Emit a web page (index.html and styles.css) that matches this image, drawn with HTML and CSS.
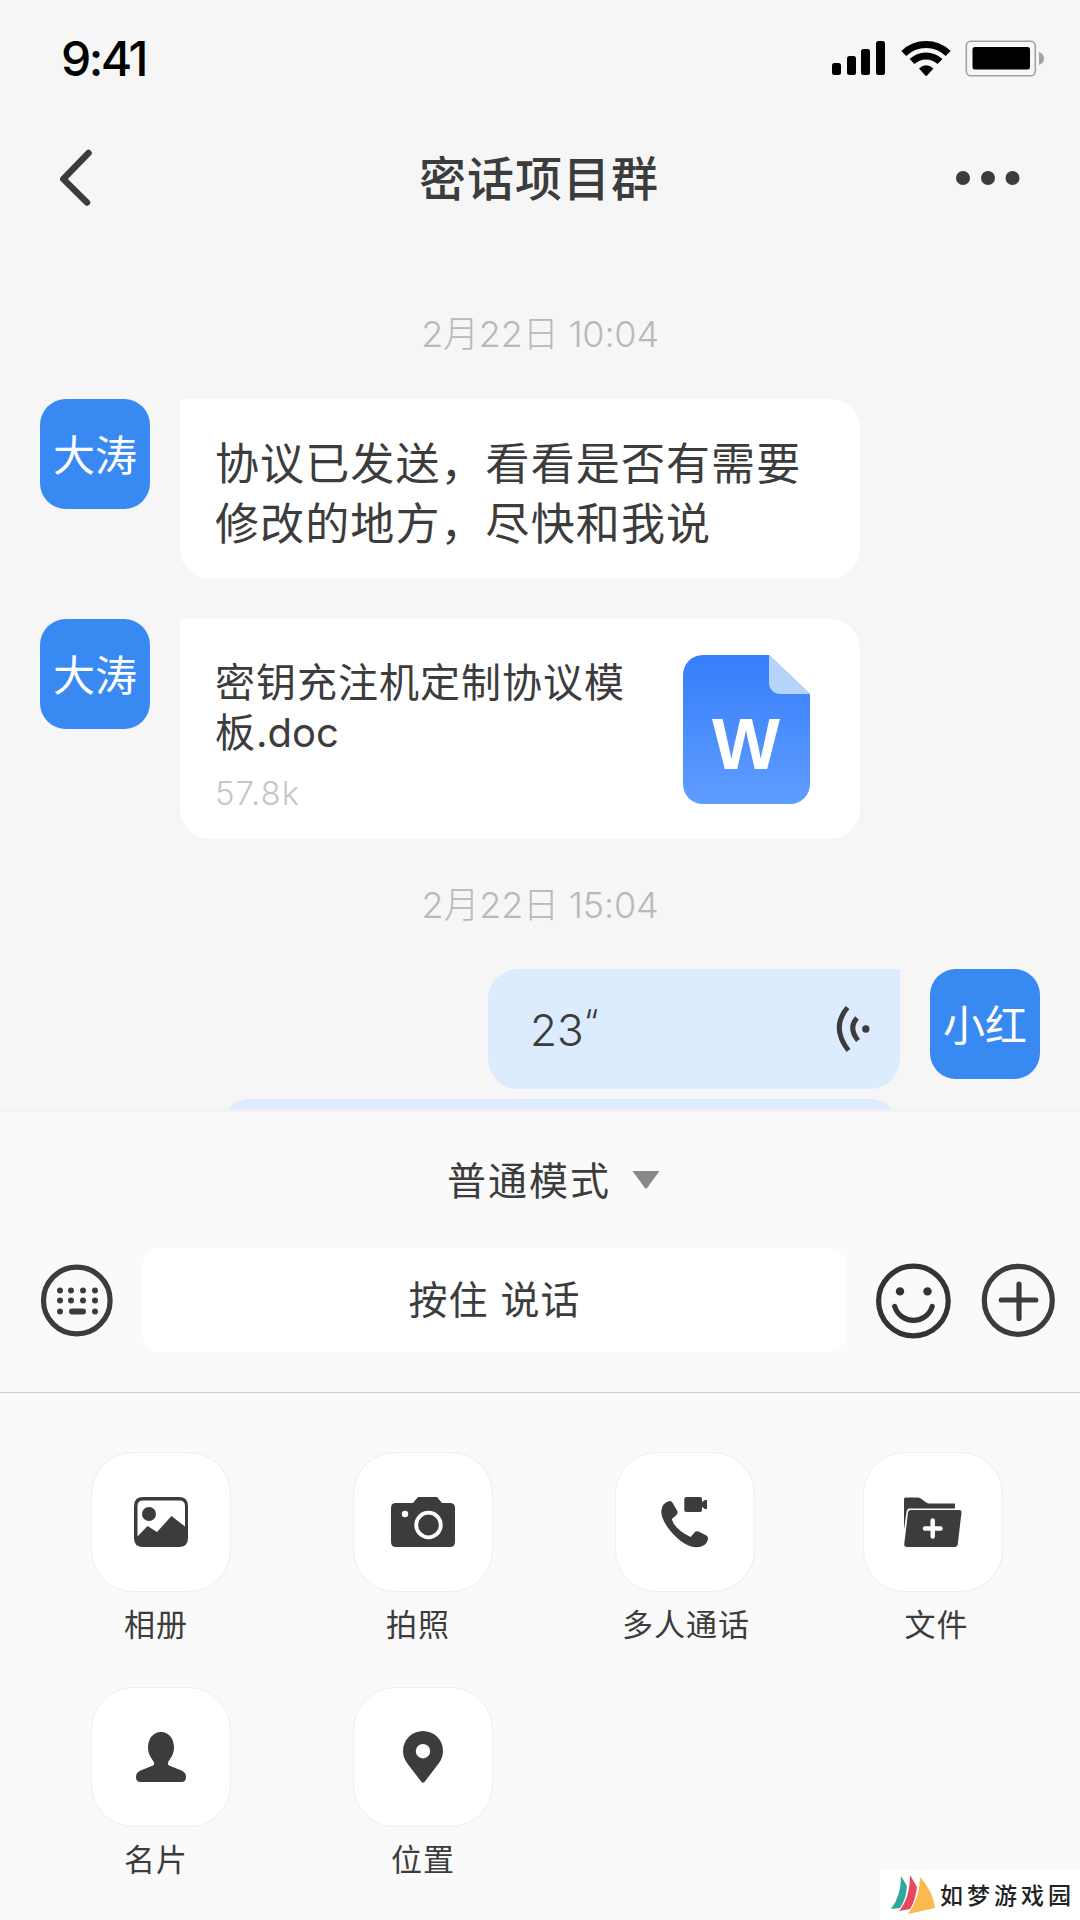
FILE: index.html
```html
<!DOCTYPE html>
<html lang="zh-CN">
<head>
    <meta charset="UTF-8">
    <meta name="viewport" content="width=device-width, initial-scale=1.0">
    <title>密话项目群</title>
    <link rel="stylesheet" href="styles.css">
</head>
<body>
    <div class="phone">
        <div class="status-bar">
            <span class="clock">9:41</span>
            <svg class="status-icons" width="214" height="40" viewBox="0 0 214 40">
                <rect x="2" y="24" width="9" height="12" rx="2.5"/>
                <rect x="17" y="17" width="9" height="19" rx="2.5"/>
                <rect x="31" y="10" width="9" height="26" rx="2.5"/>
                <rect x="46" y="2" width="9" height="34" rx="2.5"/>
                <g fill="none" stroke="#000" stroke-width="7">
                    <path d="M73.8 14.400a32 32 0 0 1 44.4 0"/>
                    <path d="M82 22.600a20 20 0 0 1 28 0"/>
                </g>
                <path d="M89 29.500q7-6.500 14.400 0l-6.300 7q-.9.900-1.800 0z"/>
                <rect x="136.300" y="2.300" width="69" height="34.500" rx="4.500" fill="none" stroke="#a2a2a2" stroke-width="1.600"/>
                <rect x="142.500" y="8" width="57.500" height="22.500" rx="2.500"/>
                <path d="M209 13q5 2 5 6.500t-5 6.500z" fill="#a2a2a2"/>
            </svg>
        </div>

        <div class="header">
            <svg class="back" width="36" height="60" viewBox="0 0 36 60">
                <path d="M32.500 5 7.300 31 31 54.500"/>
            </svg>
            <h1>密话项目群</h1>
            <svg class="more" width="64" height="16" viewBox="0 0 64 16">
                <circle cx="7" cy="8" r="7"/>
                <circle cx="32" cy="8" r="7"/>
                <circle cx="56.500" cy="8" r="7"/>
            </svg>
        </div>

        <div class="chat">
            <div class="date">2月22日 10:04</div>
            <div class="row">
                <div class="avatar">大涛</div>
                <div class="bubble text">协议已发送，看看是否有需要<br>修改的地方，尽快和我说</div>
            </div>
            <div class="row">
                <div class="avatar">大涛</div>
                <div class="bubble file">
                    <div class="file-info">
                        <div class="file-name">密钥充注机定制协议模<br>板<span class="ext">.doc</span></div>
                        <div class="file-size">57.8k</div>
                    </div>
                    <svg class="file-icon" width="127" height="149" viewBox="0 0 127 149">
                        <defs>
                            <linearGradient id="doc" x1="0" y1="0" x2="0" y2="1">
                                <stop offset="0" stop-color="#367dfb"/>
                                <stop offset="1" stop-color="#5f9dff"/>
                            </linearGradient>
                        </defs>
                        <path d="M20 0h66l41 39v90a20 20 0 0 1-20 20H20a20 20 0 0 1-20-20V20A20 20 0 0 1 20 0z" fill="url(#doc)"/>
                        <path d="M86 0l41 39H97a11 11 0 0 1-11-11z" fill="#b6d4f9"/>
                        <text x="63" y="114" text-anchor="middle">W</text>
                    </svg>
                </div>
            </div>
            <div class="date second">2月22日 15:04</div>
            <div class="row mine">
                <div class="bubble voice">
                    <span>23<span class="quote">“</span></span>
                    <svg width="34" height="48" viewBox="0 0 34 48">
                        <path d="M11.500 2.500Q-5.500 22.500 12.500 45.500M21 13Q12 23 22 35.500"/>
                        <circle cx="29.800" cy="24" r="3.700"/>
                    </svg>
                </div>
                <div class="avatar">小红</div>
            </div>
            <div class="bubble next"></div>
        </div>

        <div class="composer">
            <div class="mode">
                <span>普通模式</span>
                <svg width="28" height="18" viewBox="0 0 28 18"><path d="M.5 0h27L15 17q-1 1-2 0z"/></svg>
            </div>
            <div class="input-row">
                <svg class="icon" width="74" height="76" viewBox="0 0 74 76">
                    <circle class="line" cx="36.800" cy="38.500" r="33.300"/>
                    <circle cx="20" cy="28.500" r="3"/>
                    <circle cx="31" cy="28.500" r="3"/>
                    <circle cx="43" cy="28.500" r="3"/>
                    <circle cx="55" cy="28.500" r="3"/>
                    <circle cx="20" cy="38.500" r="3"/>
                    <circle cx="31" cy="38.500" r="3"/>
                    <circle cx="43" cy="38.500" r="3"/>
                    <circle cx="55" cy="38.500" r="3"/>
                    <circle cx="20" cy="49.500" r="3"/>
                    <rect x="29" y="46.500" width="17" height="6" rx="3"/>
                    <circle cx="55" cy="49.500" r="3"/>
                </svg>
                <div class="talk">按住 说话</div>
                <svg class="icon smile" width="76" height="78" viewBox="0 0 76 78">
                    <circle class="line" cx="38.400" cy="40" r="34.800"/>
                    <circle cx="25" cy="30.400" r="4.200"/>
                    <circle cx="52.500" cy="30.400" r="4.200"/>
                    <path class="line" d="M19.700 45.500c6 18.500 31.500 18.500 37.500 0"/>
                </svg>
                <svg class="icon" width="76" height="76" viewBox="0 0 76 76">
                    <circle class="line" cx="38.300" cy="38.300" r="34"/>
                    <path class="line" d="M21.300 38h34.500M39 22v34.500"/>
                </svg>
            </div>
        </div>

        <div class="tools">
            <div class="tool">
                <div class="tile">
                    <svg width="64" height="52" viewBox="0 0 64 52">
                        <path fill-rule="evenodd" d="M14 1h36q9 0 9 9v32q0 9-9 9H14q-9 0-9-9V10q0-9 9-9zM14 4.500Q8.500 4.500 8.500 10v30.500L18.500 30l9.500 6L42.500 20 56 30.500V10q0-5.500-5.500-5.500z"/>
                        <circle cx="20" cy="18" r="7"/>
                    </svg>
                </div>
                <span class="shift-left">相册</span>
            </div>
            <div class="tool">
                <div class="tile">
                    <svg width="64" height="52" viewBox="0 0 64 52">
                        <path d="M5 7h17l5-6h19l5 6h8q5 0 5 5v34q0 5-5 5H5q-5 0-5-5V12q0-5 5-5z"/>
                        <circle cx="14" cy="18" r="3.200" fill="#fff"/>
                        <circle cx="37.500" cy="29" r="12.300" fill="none" stroke="#fff" stroke-width="3.800"/>
                    </svg>
                </div>
                <span class="shift-left">拍照</span>
            </div>
            <div class="tool">
                <div class="tile">
                    <svg width="64" height="52" viewBox="0 0 64 52">
                        <path d="M33.300 1h14q1.700 0 1.700 2v3l3-2h2v9h-2l-3-2v3q0 2-1.700 2h-14q-2 0-2-2V3q0-2 2-2z"/>
                        <path d="M16 5.200q2.500-.7 4 2.300l4 7q1.500 3-1 5l-4.200 3.500q2.500 10 18.700 18l4-4.500q1.500-2 4-1l7.500 3.800q2.500 1.200 2 4-2 8-11.500 8Q31 51 17 34.500 8 23 8.300 15 9 7 16 5.200z"/>
                    </svg>
                </div>
                <span class="label-wide">多人通话</span>
            </div>
            <div class="tool">
                <div class="tile">
                    <svg width="64" height="52" viewBox="0 0 64 52">
                        <path d="M3 3q0-1.500 1.500-1.500H17q2 0 3.500 1.500l4 3q2 1.500 4 1.500h25.500v5H8.500Q6 12.500 5.500 16L3 34z"/>
                        <path d="M9.500 14h49q2.200 0 2 2.500L56.700 48.500q-.4 2.500-2.700 2.500H5.500Q3 51 3.200 48.500L7 16.500Q7.200 14 9.500 14z"/>
                        <path d="M24 32.500h15.500M31.700 24.500v16" stroke="#fff" stroke-width="4.500" stroke-linecap="round"/>
                    </svg>
                </div>
                <span class="shift-right">文件</span>
            </div>
            <div class="tool">
                <div class="tile">
                    <svg width="64" height="52" viewBox="0 0 64 52">
                        <path d="M32 1c8 0 13 7 13 15.500 0 6.500-3 10-5.500 14q-1.500 3 .5 4l13 5.200q4 2 4 6.300 0 5-4.500 5h-41Q7 51 7 46q0-4.300 4-6.300L24 34.500q2-1 .5-4C22 26.500 19 23 19 16.500 19 8 24 1 32 1z"/>
                    </svg>
                </div>
                <span class="shift-left">名片</span>
            </div>
            <div class="tool">
                <div class="tile">
                    <svg width="64" height="52" viewBox="0 0 64 52">
                        <path fill-rule="evenodd" d="M32 0a20 20 0 0 1 20 20q0 6.500-4 12L33.500 51q-1.500 1.500-3 0L16 32q-4-5.500-4-12A20 20 0 0 1 32 0zm0 13a7.200 7.200 0 1 0 0 14.400A7.200 7.200 0 1 0 32 13z"/>
                    </svg>
                </div>
                <span>位置</span>
            </div>
        </div>

        <div class="watermark">
            <svg width="46" height="40" viewBox="0 0 46 40">
                <path d="M11 2l6 10q-1 14-7 22l-9 1Q11 22 11 2z" fill="#2fa79b"/>
                <path d="M20 1l7 12q-2 15-7 22L9 37Q20 24 20 1z" fill="#e8475f"/>
                <path d="M30 3q13 14 15 31l-27 6Q30 24 30 3z" fill="#fcb94d"/>
            </svg>
            <span>如梦游戏园</span>
        </div>
    </div>
</body>
</html>
```

FILE: styles.css
```css
* {
    box-sizing: border-box;
}
body {
    margin: 0;
    font-family: Inter, 'Noto Sans CJK SC', sans-serif;
    font-weight: 400;
    color: #3c3c3c;
    background-color: #f6f6f6;
}
svg {
    display: block;
    flex: none;
    fill: #3c3c3c;
}
.phone {
    position: relative;
    display: flex;
    flex-direction: column;
    width: 1080px;
    height: 1920px;
    overflow: hidden;
}

/* status bar */
.status-bar {
    display: flex;
    justify-content: space-between;
    align-items: center;
    height: 118px;
    padding: 0 36px 0 61px;
}
.clock {
    padding-bottom: 1px;
    font-size: 48px;
    font-weight: 500;
    letter-spacing: -2.5px;
    color: #000;
}
.status-icons {
    fill: #000;
}

/* header */
.header {
    display: flex;
    justify-content: space-between;
    align-items: center;
    height: 120px;
    padding: 0 60px 0 56px;
}
.header h1 {
    margin: 0;
    padding-top: 1px;
    font-size: 47px;
    font-weight: 500;
    letter-spacing: 1px;
    line-height: 60px;
}
.back {
    margin-right: 30px;
}
.back path {
    fill: none;
    stroke: #3c3c3c;
    stroke-width: 6.5;
    stroke-linecap: round;
    stroke-linejoin: round;
}

/* messages */
.chat {
    flex: none;
    height: 871px;
    padding: 71px 40px 0;
    overflow: hidden;
}
.date {
    height: 50px;
    margin-bottom: 40px;
    font-size: 36px;
    font-weight: 300;
    line-height: 51px;
    letter-spacing: -0.2px;
    text-align: center;
    color: #b9b9b9;
}
.date.second {
    margin-top: 41px;
    margin-bottom: 39px;
}
.row {
    display: flex;
    gap: 30px;
    margin-bottom: 40px;
}
.row.mine {
    justify-content: flex-end;
    margin-bottom: 10px;
}
.avatar {
    width: 110px;
    height: 110px;
    border-radius: 26px;
    font-size: 42px;
    font-weight: 400;
    line-height: 113px;
    text-align: center;
    color: #fff;
    background-color: #3889f2;
}
.bubble {
    width: 680px;
    border-radius: 0 30px 30px 30px;
    background-color: #fff;
}
.text {
    height: 180px;
    padding: 35px 35px 0;
    font-size: 44px;
    letter-spacing: 1.1px;
    line-height: 60px;
    white-space: nowrap;
}
.file {
    display: flex;
    justify-content: space-between;
    height: 220px;
    padding: 36px 50px 0 35px;
}
.file-name {
    padding-top: 3px;
    font-size: 40px;
    letter-spacing: 1px;
    line-height: 50px;
    white-space: nowrap;
}
.ext {
    letter-spacing: 0;
}
.file-size {
    margin-top: 15px;
    font-size: 33px;
    font-weight: 300;
    line-height: 40px;
    letter-spacing: 1px;
    color: #c6c6c6;
}
.file-icon text {
    font-family: 'Liberation Sans', Arial, sans-serif;
    font-size: 72px;
    font-weight: 700;
    fill: #fff;
}
.voice {
    display: flex;
    justify-content: space-between;
    align-items: center;
    width: 412px;
    height: 120px;
    padding: 0 30px 0 42px;
    border-radius: 30px 0 30px 30px;
    font-size: 44px;
    line-height: 50px;
    font-weight: 300;
    background-color: #ddebfe;
}
.quote {
    font-size: 36px;
    line-height: 1;
    vertical-align: 11px;
}
.voice path {
    fill: none;
    stroke: #3c3c3c;
    stroke-width: 5;
}
.next {
    height: 100px;
    margin-left: 180px;
    border-radius: 30px;
    background-color: #ddebfe;
}

/* composer */
.composer {
    flex: none;
    height: 284px;
    border-top: 3px solid #f1f1f1;
    border-bottom: 1px solid #ccc;
    background-color: #fafafa;
}
.mode {
    display: flex;
    justify-content: center;
    align-items: center;
    gap: 21px;
    height: 136px;
    padding-left: 27px;
    font-size: 39px;
    letter-spacing: 2px;
}
.mode span {
    padding-bottom: 4px;
}
.mode svg {
    fill: #888;
}
.input-row {
    display: flex;
    align-items: center;
    height: 104px;
    padding-left: 40px;
}
.talk {
    width: 703px;
    height: 104px;
    margin: 0 29px;
    border-radius: 17px;
    font-size: 39px;
    letter-spacing: 1px;
    line-height: 104px;
    text-align: center;
    background-color: #fff;
}
.icon .line {
    fill: none;
    stroke: #3c3c3c;
    stroke-width: 5.2;
    stroke-linecap: round;
}
.smile {
    margin-right: 29px;
    fill: #333;
}
.smile .line {
    stroke: #333;
}

/* tools */
.tools {
    flex: 1;
    display: grid;
    grid-template-columns: 262px 262px 248px 140px;
    grid-template-rows: 235px 200px;
    padding: 59px 0 0 91px;
    background-color: #fafafa;
}
.tool {
    display: flex;
    flex-direction: column;
    align-items: center;
    width: 140px;
    font-size: 31px;
    line-height: 40px;
    letter-spacing: 1px;
    white-space: nowrap;
}
.tile {
    display: flex;
    justify-content: center;
    align-items: center;
    width: 140px;
    height: 140px;
    margin-bottom: 13px;
    border: 1px solid #eee;
    border-radius: 42px;
    background-color: #fff;
}
.shift-left {
    padding-right: 10px;
}
.shift-right {
    padding-left: 7px;
}
.label-wide {
    padding-left: 2px;
}

.watermark {
    position: absolute;
    right: 0;
    bottom: 0;
    display: flex;
    align-items: center;
    gap: 4px;
    width: 200px;
    height: 50px;
    padding: 0 0 2px 10px;
    font-size: 23px;
    font-weight: 500;
    letter-spacing: 4px;
    white-space: nowrap;
    color: #222;
    background-color: #fff;
}
```
